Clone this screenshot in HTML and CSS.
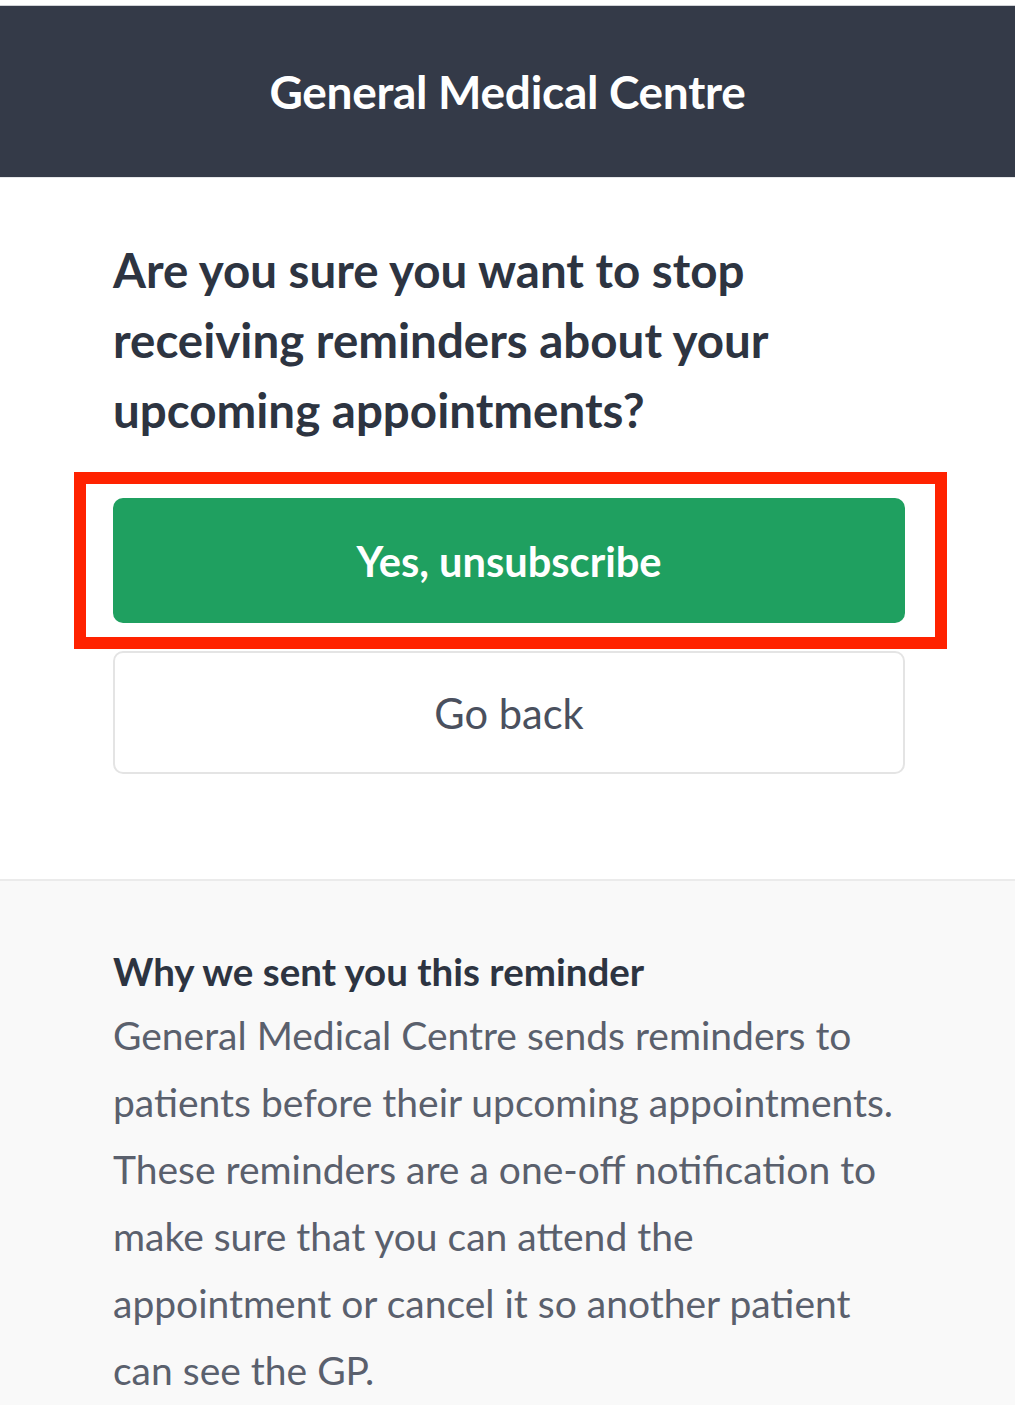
FILE: index.html
```html
<!DOCTYPE html>
<html lang="en">
<head>
<meta charset="utf-8">
<title>Unsubscribe</title>
<link rel="stylesheet" href="styles.css">
</head>
<body>
<header class="site-header">
  <h1 class="site-title">General Medical Centre</h1>
</header>
<main class="main">
  <h2 class="question">Are you sure you want to stop receiving reminders about your upcoming appointments?</h2>
  <div class="actions">
    <div class="primary-wrap">
      <button class="btn btn-primary">Yes, unsubscribe</button>
      <span class="highlight"></span>
    </div>
    <button class="btn btn-secondary">Go back</button>
  </div>
</main>
<section class="info">
  <h3 class="info-title">Why we sent you this reminder</h3>
  <p class="info-text">General Medical Centre sends reminders to patients before their upcoming appointments. These reminders are a one-off notification to make sure that you can attend the appointment or cancel it so another patient can see the GP.</p>
</section>
</body>
</html>
```
FILE: styles.css
```css
html, body {
  margin: 0;
  padding: 0;
  background: #f9f9f9;
}
body {
  font-family: Lato, "Open Sans", sans-serif;
  padding-top: 5px;
  background: #ffffff;
}
.site-header {
  background: #343a48;
  border-top: 1px solid #d0d2d6;
  border-bottom: 1px solid #e6e7ea;
  height: 171px;
  display: flex;
  align-items: center;
  justify-content: center;
}
.site-title {
  margin: 0;
  color: #ffffff;
  font-size: 46px;
  font-weight: 700;
  letter-spacing: -0.3px;
}
.main {
  background: #ffffff;
  padding: 57px 110px 105px 113px;
  border-bottom: 2px solid #ebebeb;
}
.question {
  margin: 0;
  font-size: 47.5px;
  line-height: 70px;
  font-weight: 700;
  color: #2d3441;
}
.actions {
  margin-top: 53px;
  display: flex;
  flex-direction: column;
  gap: 28px;
}
.primary-wrap {
  position: relative;
}
.btn {
  display: block;
  width: 100%;
  border-radius: 10px;
  font-family: Lato, "Open Sans", sans-serif;
  font-size: 41.6px;
  cursor: pointer;
}
.btn-primary {
  height: 125px;
  background: #1fa060;
  color: #ffffff;
  font-weight: 700;
  border: none;
}
.btn-secondary {
  height: 123px;
  background: #ffffff;
  color: #4a505e;
  font-weight: 400;
  border: 2px solid #e4e4e4;
}
.highlight {
  position: absolute;
  left: -39px;
  top: -26px;
  right: -42px;
  bottom: -26px;
  border: 12px solid #ff2200;
  pointer-events: none;
}
.info {
  background: #f9f9f9;
  padding: 67px 110px 40px 113px;
}
.info-title {
  margin: 0;
  font-size: 38.5px;
  line-height: 46px;
  font-weight: 700;
  color: #2d3441;
}
.info-text {
  margin: 8px 0 0;
  font-size: 39px;
  line-height: 67px;
  color: #5a606d;
}
```
